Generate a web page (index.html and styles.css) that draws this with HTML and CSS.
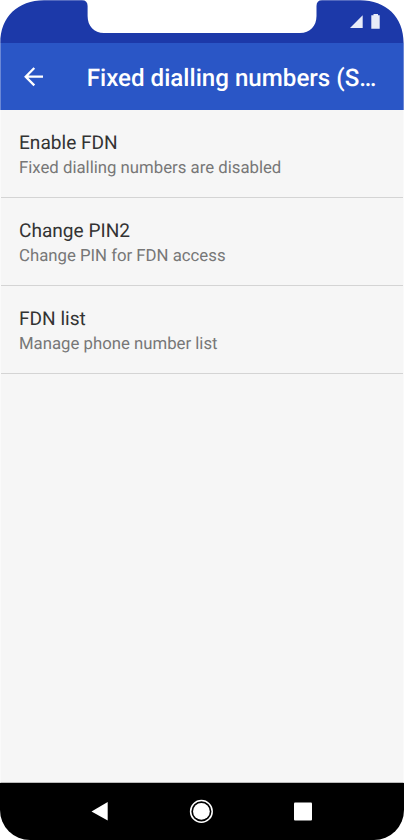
FILE: index.html
```html
<!DOCTYPE html>
<html lang="en">
<head>
<meta charset="utf-8">
<title>Fixed dialling numbers</title>
<link rel="stylesheet" href="styles.css">
</head>
<body>
<div class="phone">
  <svg class="status" viewBox="0 0 404 43" aria-hidden="true">
    <path class="status-fill" d="M.3 43C.3 17 18 .3 44 .3H82Q87.600 .3 87.600 6V16C87.600 26 94 33 104 33H300C310 33 316.500 26 316.500 16V6Q316.500 .3 322 .3H360C386 .3 403.600 17 403.600 43Z"/>
    <path class="status-icon" d="M350 28L362.700 15.200V28Z"/>
    <path class="status-icon" d="M373.500 14H378V15.200H379.700V28.800H371.300V15.200H373.500Z"/>
  </svg>
  <header class="appbar">
    <svg class="back" viewBox="0 0 20 20"><path d="M19 9.700H2M10.300 1L1.700 9.700L10.300 18.400"/></svg>
    <h1>Fixed dialling numbers (S…</h1>
  </header>
  <main>
    <section class="item"><h2>Enable FDN</h2><p>Fixed dialling numbers are disabled</p></section>
    <section class="item"><h2>Change PIN2</h2><p>Change PIN for FDN access</p></section>
    <section class="item"><h2>FDN list</h2><p>Manage phone number list</p></section>
  </main>
  <nav>
    <svg viewBox="0 0 24 24"><path d="M3.500 12.400L19.700 3.100V21.600Z"/></svg>
    <svg viewBox="0 0 24 24"><circle class="ring" cx="12.400" cy="12.400" r="10.800"/><circle cx="12.400" cy="12.400" r="8.400"/></svg>
    <svg viewBox="0 0 24 24"><rect x="3" y="3.400" width="18" height="18.200" rx="1"/></svg>
  </nav>
</div>
</body>
</html>
```
FILE: styles.css
```css
* { box-sizing: border-box; }
body { margin: 0; background: #fff; font-family: Roboto, "Liberation Sans", sans-serif; text-rendering: geometricPrecision; }
.phone { width: 404px; height: 840px; display: flex; flex-direction: column; overflow: hidden; }
.status { width: 404px; height: 43px; flex: none; display: block; }
.status-fill { fill: #1c39a9; }
.status-icon { fill: #e8ecf8; }
.appbar { height: 67px; flex: none; display: flex; align-items: center; padding-left: 22.500px; background: #2a56c6; color: #fff; border-left: 1px solid #6b88d6; border-right: 1px solid #6b88d6; }
.back { width: 20px; height: 20px; flex: none; fill: none; stroke: #fff; stroke-width: 2.3; }
h1 { margin: 3px 0 0 43.200px; font-size: 24.150px; font-weight: 500; line-height: 30px; white-space: nowrap; }
main { flex: 1; background: #f6f6f6; border-left: 1px solid #fafafa; border-right: 1px solid #fafafa; border-bottom: 1px solid #bbb; }
.item { height: 88px; padding: 21px 18px 0; border-bottom: 1px solid #d4d4d4; }
h2 { margin: 0; font-size: 19.100px; font-weight: 400; line-height: 24px; color: #333; }
p { margin: 1px 0 0; font-size: 16.750px; line-height: 24px; color: #777; }
nav { height: 57px; flex: none; display: flex; justify-content: space-between; align-items: center; padding: 0 89.500px 1px 87.500px; background: #000; border-radius: 0 0 30px 30px; }
nav svg { width: 24px; height: 24px; fill: #fff; }
.ring { fill: none; stroke: #fff; stroke-width: 1.500; }
```
